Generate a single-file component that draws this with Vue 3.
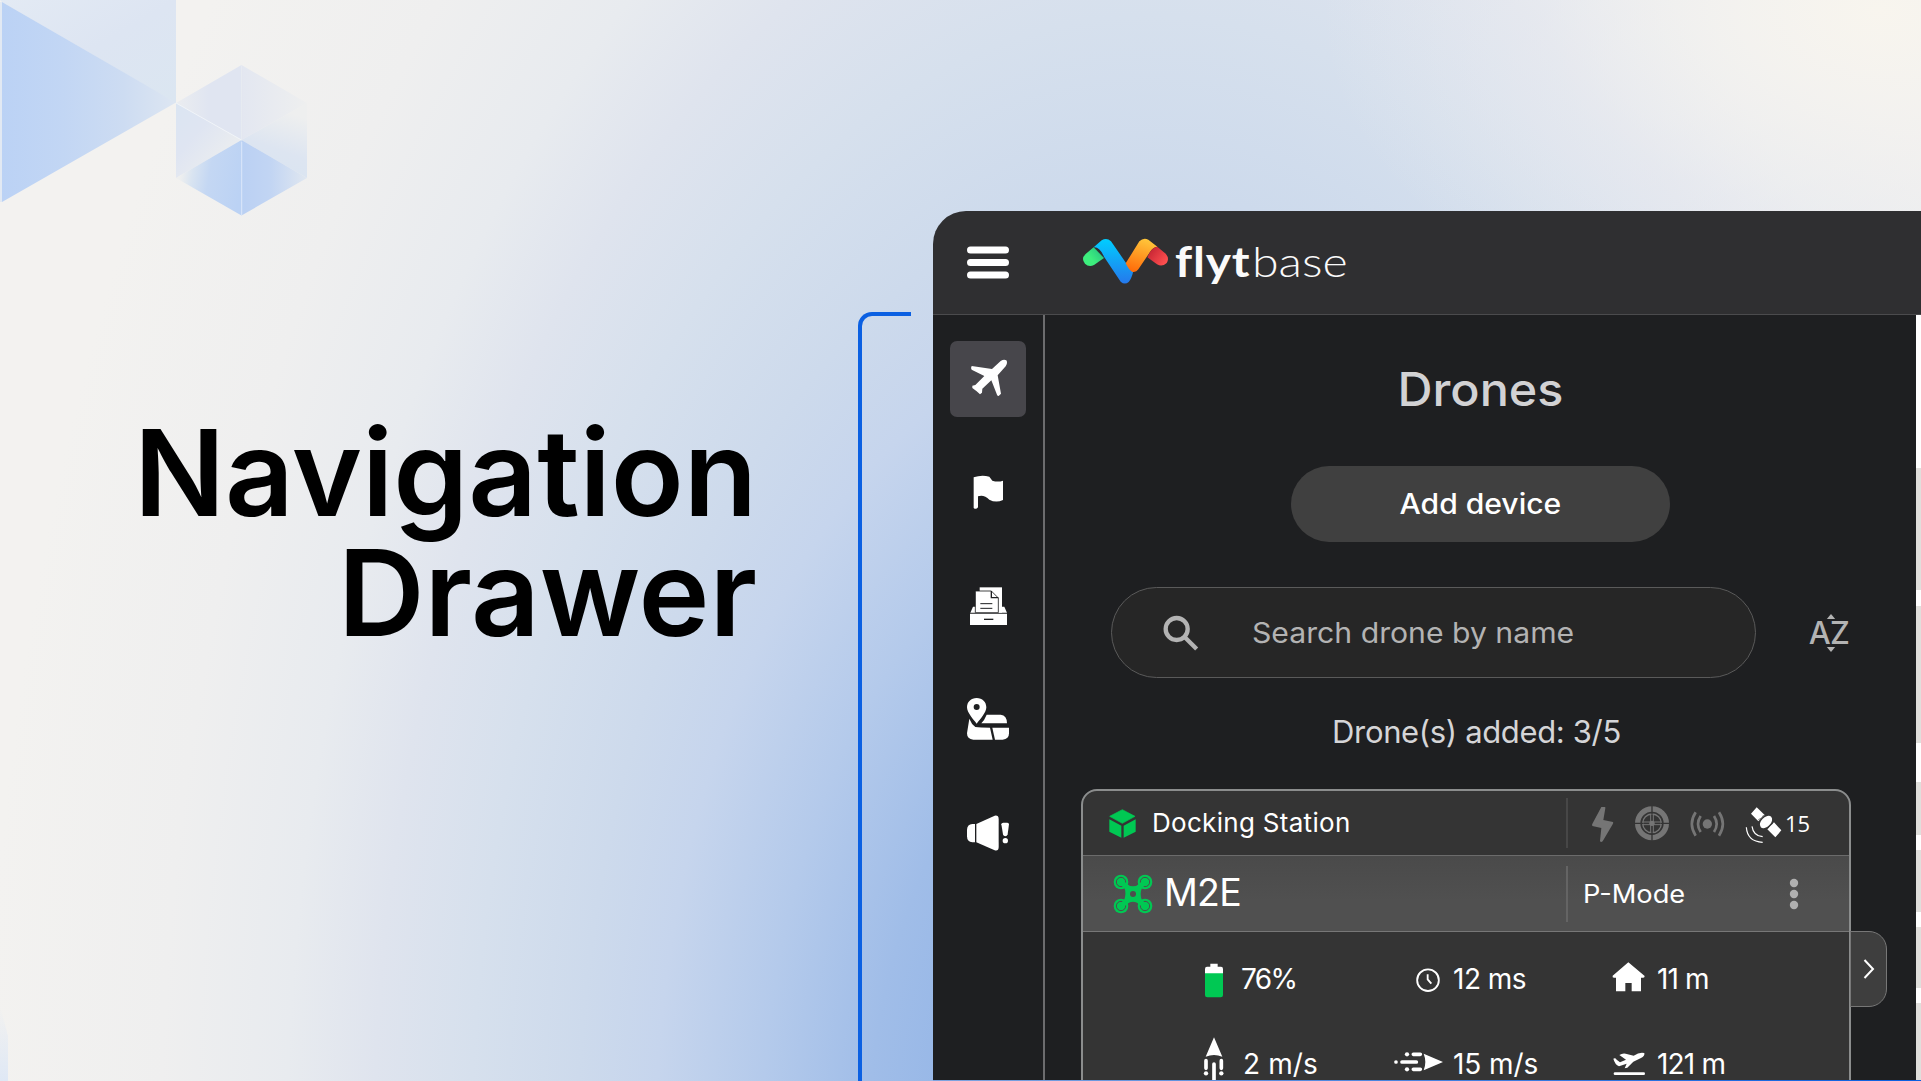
<script setup>
const stats = [
  { icon: 'battery', text: '76%', ls: -1.6, dx: -1 },
  { icon: 'clock', text: '12 ms', ls: -0.5, dx: -1 },
  { icon: 'home', text: '11 m', ls: -0.9, dx: -1 },
  { icon: 'up', text: '2 m/s', ls: 0.1, dx: 1 },
  { icon: 'forward', text: '15 m/s', ls: -0.1, dx: -1 },
  { icon: 'takeoff', text: '121 m', ls: -0.8, dx: -1 },
]
</script>

<template>
  <div class="page">
    <svg class="decor" width="330" height="230" viewBox="0 0 330 230">
      <defs>
        <linearGradient id="tri" x1="0" y1="0" x2="1" y2="0">
          <stop offset="0" stop-color="#bbd2f5" /><stop offset=".35" stop-color="#c2d6f4" />
          <stop offset=".7" stop-color="#cddcf2" /><stop offset="1" stop-color="#dde6f2" />
        </linearGradient>
        <linearGradient id="band" x1="0" y1="0" x2="1" y2="1">
          <stop offset="0" stop-color="#e3eaf4" /><stop offset=".5" stop-color="#dde5f2" /><stop offset="1" stop-color="#dbe6f1" />
        </linearGradient>
        <linearGradient id="hTop" x1="0" y1="0" x2="1" y2="0">
          <stop offset="0" stop-color="#ebedf0" /><stop offset=".5" stop-color="#e0e5f1" />
        </linearGradient>
        <linearGradient id="hTopR" x1="0" y1="0" x2="1" y2="0">
          <stop offset="0" stop-color="#e3e7f1" /><stop offset="1" stop-color="#eeefef" />
        </linearGradient>
        <linearGradient id="hLeft" x1="0" y1="0" x2=".8" y2=".8">
          <stop offset="0" stop-color="#dbe5f2" /><stop offset=".45" stop-color="#dfe5f2" /><stop offset="1" stop-color="#eceeef" />
        </linearGradient>
        <linearGradient id="hRight" x1="0" y1="1" x2=".3" y2="0">
          <stop offset="0" stop-color="#d8e4f1" /><stop offset=".5" stop-color="#dde5f1" /><stop offset="1" stop-color="#eeefef" />
        </linearGradient>
        <linearGradient id="hBotL" x1="1" y1=".6" x2="0" y2=".4">
          <stop offset="0" stop-color="#bbd2f4" /><stop offset=".5" stop-color="#c4d7f3" /><stop offset=".75" stop-color="#d9e4f1" /><stop offset=".92" stop-color="#eeefef" />
        </linearGradient>
        <linearGradient id="hBotR" x1="0" y1="0" x2="1" y2="0">
          <stop offset="0" stop-color="#bad0f3" /><stop offset=".45" stop-color="#c2d5f3" /><stop offset="1" stop-color="#e0e7f0" />
        </linearGradient>
      </defs>
      <polygon points="0,0 176,0 176,103 2,2" fill="url(#band)" />
      <polygon points="2,2 176,102.500 2,202" fill="url(#tri)" />
      <path d="M1 2V202" stroke="#dce6f5" stroke-width="1.500" />
      <polygon points="241.500,65 241.500,140 176,103" fill="url(#hTop)" />
      <polygon points="241.500,65 241.500,140 307,103" fill="url(#hTopR)" />
      <polygon points="176,103 241.500,140 176,178" fill="url(#hLeft)" />
      <polygon points="307,103 241.500,140 307,178" fill="url(#hRight)" />
      <polygon points="241.500,140 241.500,215.500 176,178" fill="url(#hBotL)" />
      <polygon points="241.500,140 241.500,215.500 307,178" fill="url(#hBotR)" />
      <path d="M176 103L241.500 140" stroke="#f3f6fa" stroke-width=".8" />
      <path d="M241.700 142V215" stroke="#d9e6fa" stroke-width="1" />
      <path d="M241.700 66V140" stroke="#e9edf4" stroke-width=".6" />
    </svg>
    <i class="corner"></i>

    <h1 class="hero">Navigation<br />Drawer</h1>
    <div class="bracket"></div>

    <section class="panel">
      <header class="top">
        <svg class="burger" viewBox="0 0 42 32" width="42" height="33"><path d="M3.500 3.500H38.500M3.500 16H38.500M3.500 28.500H38.500" stroke="#fff" stroke-width="7" stroke-linecap="round" /></svg>
        <svg class="mark" viewBox="486 114 260 140" width="86.700" height="46.700">
          <defs>
            <linearGradient id="lb" x1="0" y1="0" x2="0" y2="1"><stop offset="0" stop-color="#00ceff" /><stop offset="1" stop-color="#2578ec" /></linearGradient>
            <linearGradient id="lo" x1=".6" y1="0" x2=".3" y2="1"><stop offset="0" stop-color="#ffc53a" /><stop offset="1" stop-color="#ff6c0a" /></linearGradient>
            <linearGradient id="lg" x1="1" y1="0" x2="0" y2=".7"><stop offset="0" stop-color="#22b982" /><stop offset=".7" stop-color="#3dee7d" /></linearGradient>
            <linearGradient id="lr" x1="0" y1="0" x2="1" y2=".7"><stop offset="0" stop-color="#bb1d2e" /><stop offset="1" stop-color="#ff5050" /></linearGradient>
          </defs>
          <path d="M552 174L522 195Q506 202 495 191Q482 176 497 162L521 142Z" fill="url(#lg)" />
          <path d="M521 142L545 121Q560 111 573 124L630 206L640 214Q634 238 626 246Q614 256 602 245L552 170Q539 140 521 142Z" fill="url(#lb)" />
          <path d="M617 190L658 124Q670 112 685 119L712 140Q698 142 690 156L655 208Q648 218 636 215Q627 211 617 190Z" fill="url(#lo)" />
          <path d="M712 140L737 161Q749 175 740 189Q726 202 711 193L682 172L690 156Q698 142 712 140Z" fill="url(#lr)" />
        </svg>
        <span class="word"><b>flyt</b><span>base</span></span>
      </header>

      <div class="body">
        <nav class="rail">
          <button class="tile active">
            <svg viewBox="60 63 228 228" width="76" height="76" fill="#fff"><path d="M186 147L212 123Q222 116 229 121Q234 128 227 139L203 166L213 221L206 228Q202 228 201 224L184 181L157 206L156 218L150 223L140 214L127 204L127 197L136 195L163 168L125 149Q121 145 125 138Z" /></svg>
          </button>
          <button class="tile">
            <svg viewBox="60 405 228 228" width="76" height="76" fill="#fff"><path d="M131 472Q155 463 178 470L187 482Q204 487 219 482V540Q198 550 178 539Q162 523 144 529V562Q138 570 131 564Z" /></svg>
          </button>
          <button class="tile">
            <svg viewBox="60 744 228 228" width="76" height="76">
              <path d="M149 802H216V878H149Z" fill="#fff" />
              <path d="M121 878L129 860H223L231 878Z" fill="#fff" />
              <path d="M136 878V813H184L205 834V878Z" fill="#fff" stroke="#1e1f21" stroke-width="2.500" />
              <path d="M184 813V833H205" fill="none" stroke="#1e1f21" stroke-width="4" />
              <path d="M151 851H187M151 865H187" stroke="#1e1f21" stroke-width="3" />
              <path d="M120 881H231V915H120Z" fill="#fff" />
              <path d="M162 898H190" stroke="#1e1f21" stroke-width="4" />
            </svg>
          </button>
          <button class="tile">
            <svg viewBox="60 184 228 228" width="76" height="76" fill="#fff">
              <path fill-rule="evenodd" d="M140 232C123 232 111 244 111 260C111 276 130 296 140 309C150 296 169 276 169 260C169 244 157 232 140 232ZM140 250A9 9 0 1 1 140 268A9 9 0 1 1 140 250Z" />
              <path d="M170 282H212Q231 284 231 308H154Q163 299 170 282Z" />
              <path d="M118 294Q124 310 136 319Q150 321 180 321L188 357H130Q111 356 111 338Z" />
              <path d="M187 321H237V338Q237 356 218 357H195Z" />
            </svg>
          </button>
          <button class="tile">
            <svg viewBox="60 526 228 228" width="76" height="76" fill="#fff">
              <path d="M135 613V668H127Q111 667 111 650V630Q112 614 127 613Z" />
              <path d="M139 613L194 588Q206 586 206 598V682Q206 695 194 692L139 668Z" />
              <path d="M214 614Q214 609 220 609H232Q237 609 237 614L233 644Q231 650 226 650Q220 650 219 644Z" /><circle cx="226" cy="663" r="8" />
            </svg>
          </button>
        </nav>

        <main class="main">
          <h2 class="title">Drones</h2>
          <button class="add"><span>Add device</span></button>
          <div class="search-row">
            <label class="search">
              <svg viewBox="217 130 108 108" width="36" height="36"><circle cx="258" cy="172" r="33" fill="none" stroke="#b3b3b3" stroke-width="13" /><path d="M281 195L318 232" stroke="#b3b3b3" stroke-width="13" /></svg>
              <span>Search drone by name</span>
            </label>
            <div class="az">
              <svg viewBox="0 0 10 6" width="10" height="5"><path d="M0 6L5 0L10 6Z" fill="#b3b3b3" /></svg>
              <span>AZ</span>
              <svg viewBox="0 0 10 6" width="10" height="5"><path d="M0 0L5 6L10 0Z" fill="#b3b3b3" /></svg>
            </div>
          </div>
          <p class="count">Drone(s) added: 3/5</p>

          <article class="card">
            <div class="row dock">
              <svg class="cube" viewBox="117 84 81 87" width="27" height="29" fill="#00c853"><path d="M157 86L195 106L157 127L119 106Z" stroke="#00c853" stroke-width="2" stroke-linejoin="round" /><path d="M118 115L154 134V170L118 152ZM197 115L161 134V170L197 152Z" /></svg>
              <span class="dock-name">Docking Station</span>
              <div class="right status">
                <svg viewBox="120 72 690 120" width="230" height="40">
                  <path d="M184 81H194Q197 81 196 85L190 120L219 126Q221 129 218 133L188 184Q182 188 180 183L184 144L157 138Q155 134 158 130Z" fill="#757575" />
                  <g fill="none" stroke="#757575"><circle cx="336" cy="130" r="43" stroke-width="16" /><circle cx="336" cy="130" r="28" stroke-width="4" /></g>
                  <path d="M336 78V104M336 156V182M284 130H310M362 130H388" stroke="#343434" stroke-width="4" />
                  <path d="M332 104V126H308M340 104V126H364M332 156V134H308M340 156V134H364" stroke="#757575" stroke-width="3" fill="none" /><circle cx="336" cy="130" r="8" fill="#757575" />
                  <circle cx="502" cy="132" r="14" fill="#757575" />
                  <path d="M482 108Q466 132 482 156M522 108Q538 132 522 156M467 97Q444 132 467 167M537 97Q560 132 537 167" fill="none" stroke="#757575" stroke-width="8" />
                  <g fill="#fff"><path d="M650 82L674 105L655 124L633 101ZM702 127L724 151L706 172L682 148Z" /><ellipse cx="678" cy="126" rx="22" ry="14" transform="rotate(-45 678 126)" /></g>
                  <path d="M655 119Q666 117 671 105M684 145Q686 134 699 130" stroke="#343434" stroke-width="2" fill="none" />
                  <path d="M619 142Q622 185 668 187M636 139Q640 168 668 170" stroke="#fff" stroke-width="3.500" fill="none" />
                </svg>
                <span class="sat">15</span>
              </div>
            </div>
            <div class="row drone">
              <svg class="quad" viewBox="129 280 120 120" width="40" height="40">
                <g fill="#00c853"><circle cx="153" cy="304" r="22" /><circle cx="225" cy="304" r="22" /><circle cx="153" cy="376" r="22" /><circle cx="225" cy="376" r="22" /></g>
                <g fill="none" stroke="#4d4d4d" stroke-width="3"><circle cx="153" cy="304" r="14" /><circle cx="225" cy="304" r="14" /><circle cx="153" cy="376" r="14" /><circle cx="225" cy="376" r="14" /></g>
                <path d="M153 304L174 322M225 304L204 322M153 376L174 358M225 376L204 358" stroke="#00c853" stroke-width="15" />
                <path d="M163 320L171 312Q189 322 207 312L216 321Q208 340 216 360L207 369Q189 358 171 369L162 360Q170 340 163 320Z" fill="#00c853" /><circle cx="189" cy="340" r="9" fill="#4d4d4d" />
              </svg>
              <span class="drone-name">M2E</span>
              <div class="right mode">
                <span>P-Mode</span>
                <svg viewBox="0 0 10 32" width="10" height="32" fill="#b0b0b0"><circle cx="5" cy="5" r="4.200" /><circle cx="5" cy="16" r="4.200" /><circle cx="5" cy="27" r="4.200" /></svg>
              </div>
            </div>
            <div class="stats">
              <div v-for="s in stats" :key="s.text" class="stat">
                <svg v-if="s.icon === 'battery'" viewBox="336 530 180 132" width="60" height="44"><path d="M421 550H443V559H453Q459 559 459 566V590H405V566Q405 559 411 559H421Z" fill="#fff" /><path d="M405 579H459V644Q459 651 452 651H412Q405 651 405 644Z" fill="#00c853" /></svg>
                <svg v-else-if="s.icon === 'clock'" viewBox="72 110 180 132" width="60" height="44" fill="none" stroke="#fff" stroke-width="5.500"><circle cx="174" cy="179.500" r="32.500" /><path d="M173 162V177L184 190" /></svg>
                <svg v-else-if="s.icon === 'home'" viewBox="174 530 180 132" width="60" height="44"><path d="M265 546L314 587Q314 593 308 592H303V633H275V608H256V633H228V592H222Q216 592 218 586Z" fill="#fff" /></svg>
                <svg v-else-if="s.icon === 'up'" viewBox="336 785 180 132" width="60" height="44"><path d="M432 771L457 829Q432 819 407 829Z" fill="#fff" /><path d="M432 851V900M408 841V864M454 841V864" stroke="#fff" stroke-width="11" stroke-linecap="round" /><g fill="#fff"><circle cx="408" cy="879" r="6.500" /><circle cx="454" cy="879" r="6.500" /></g></svg>
                <svg v-else-if="s.icon === 'forward'" viewBox="72 365 180 132" width="60" height="44"><path d="M219 425L161 450Q171 425 161 400Z" fill="#fff" /><path d="M96 425H139M130 402H151M130 447H151" stroke="#fff" stroke-width="11" stroke-linecap="round" /><g fill="#fff"><circle cx="78" cy="425" r="5.500" /><circle cx="111" cy="402" r="6.500" /><circle cx="111" cy="447" r="6.500" /></g></svg>
                <svg v-else viewBox="174 785 180 132" width="60" height="44"><path d="M220 835Q226 832 230 838L240 846L258 838L238 824Q247 818 257 820L281 826Q299 814 313 818Q315 827 303 833L280 844L262 862L254 864L260 850L237 858Q225 853 220 835Z" fill="#fff" /><path d="M225 880H311" stroke="#fff" stroke-width="8" stroke-linecap="round" /></svg>
                <span :style="{ letterSpacing: s.ls + 'px', marginLeft: s.dx + 'px' }">{{ s.text }}</span>
              </div>
            </div>
            <div class="tab"><svg viewBox="0 0 12 20" width="12" height="20"><path d="M1.500 1L10 10L1.500 19" fill="none" stroke="#fff" stroke-width="2" /></svg></div>
          </article>
        </main>
        <aside class="map"></aside>
      </div>
    </section>
    <i class="baseline"></i>
  </div>
</template>

<style>
body { margin: 0; overflow: hidden; }
</style>

<style scoped>
* { box-sizing: border-box; }
.page {
  position: relative; display: flex; align-items: flex-start;
  width: 1921px; height: 1081px; overflow: hidden;
  font-family: Inter, "Liberation Sans", sans-serif; color: #fff;
  background:
    radial-gradient(ellipse 560px 350px at 1880px 10px, #f8f5ee 0%, rgba(245,243,239,.85) 25%, rgba(238,238,240,.45) 60%, rgba(225,230,240,0) 100%),
    radial-gradient(ellipse 970px 1620px at 1150px 1150px, #8aafe6 10%, #a0bde8 29%, #b4caeb 40%, #c6d5ed 51%, #cddaec 59%, #d6e0ed 70%, #dfe4ee 80%, #e8ebef 89%, #efefef 102%, #f3f2f0 120%);
}
.decor { position: absolute; left: 0; top: 0; }
.corner { position: absolute; left: 0; bottom: 0; width: 8px; height: 75px; background: linear-gradient(#e9eef500, #dfe8f5); clip-path: polygon(0 0, 100% 40%, 100% 100%, 0 100%); }
.hero { width: 757px; margin: 413px 0 0; text-align: right; font-weight: 600; font-size: 120px; line-height: 120px; letter-spacing: -.1px; color: #000; white-space: nowrap; }
.bracket { width: 53px; height: 800px; margin: 312px 0 0 101px; border: solid #0b60e2; border-width: 4px 0 0 4px; border-top-left-radius: 14px; flex: none; }
.panel { width: 988px; height: 869px; margin: 211px 0 0 22px; flex: none; border-radius: 33px 0 0 0; overflow: hidden; background: #2f2f31; }
.top { display: flex; align-items: center; height: 104px; border-bottom: 1px solid #4b4b4d; padding-left: 34px; }
.burger { margin-top: -1px; }
.mark { margin: -2px 0 0 73px; }
.word { display: flex; align-items: baseline; margin: -4px 0 0 6px; line-height: 50px; color: #fafafa; }
.word b { width: 77px; font: 700 42px/50px Lato, sans-serif; letter-spacing: .7px; transform: scaleX(1.14); transform-origin: left; }
.word span { font: 300 42px/50px Lato, sans-serif; transform: scaleX(1.15); transform-origin: left; }
.body { display: flex; height: 765px; background: #1e1f21; }
.rail { width: 112px; border-right: 2px solid #6c6c6e; padding: 26px 0 0 17px; display: flex; flex-direction: column; gap: 37.500px; flex: none; }
.tile { width: 76px; height: 76px; padding: 0; border: 0; border-radius: 7px; background: none; flex: none; }
.tile svg { display: block; }
.active { background: #47464b; }
.main { width: 871px; display: flex; flex-direction: column; flex: none; }
.title { margin: 47px 0 0; font-weight: 450; font-size: 46px; line-height: 54px; text-align: center; color: #d2d2d4; transform: scaleX(1.055); }
.add { width: 379px; height: 76px; margin: 50px 0 0 246px; padding: 0; border: 0; border-radius: 38px; background: #404040; color: #fff; font: 500 28px/76px Inter, sans-serif; }
.add span { display: inline-block; transform: scaleX(1.073); }
.search-row { display: flex; align-items: center; margin: 45px 0 0 66px; }
.search { display: flex; align-items: center; width: 645px; height: 91px; padding-left: 51px; border: 1.500px solid #5a5a5a; border-radius: 46px; background: #262626; }
.search span { margin-left: 53px; font-size: 28px; color: #b3b3b3; white-space: nowrap; transform: scaleX(1.078); transform-origin: left; }
.az { display: flex; flex-direction: column; align-items: center; margin-left: 51px; width: 44px; color: #b3b3b3; }
.az span { font: 500 31px/23px Inter, sans-serif; margin: 2px 0 3px; letter-spacing: -.7px; }
.az svg { display: block; position: relative; left: 2px; }
.count { margin: 36px 8px 0 0; text-align: center; font-size: 31px; line-height: 36px; letter-spacing: -.350px; color: #d5d5d7; }
.card { position: relative; width: 770px; height: 400px; margin: 39px 0 0 36px; border: 2px solid #8b8d8d; border-radius: 16px 16px 0 0; background: #343434; flex: none; }
.row { display: flex; align-items: center; }
.dock { height: 64px; padding-left: 26px; }
.dock-name { margin: -1px 0 0 16px; font-size: 26px; letter-spacing: .3px; }
.right { margin-left: auto; width: 283px; border-left: 2px solid #474747; display: flex; align-items: center; }
.status { height: 50px; }
.status svg { margin: 2px 0 0 12px; }
.sat { margin-left: -25px; font: 400 22px/30px "Open Sans", sans-serif; }
.drone { height: 77px; padding-left: 30px; background: linear-gradient(#4a4a4a, #505050 60%); border-top: 1px solid #6b6b6b; border-bottom: 1px solid #777; }
.drone-name { margin: -2px 0 0 11px; font-size: 37.500px; letter-spacing: -.8px; }
.mode { height: 56px; border-color: #646464; justify-content: space-between; padding: 0 50px 0 15px; font-size: 25px; }
.mode span { transform: scaleX(1.09); transform-origin: left; }
.stats { display: grid; grid-template-columns: 212px 204px 200px; grid-auto-rows: 85px; padding: 4px 0 0 99px; }
.stat { display: flex; align-items: center; font-size: 28px; white-space: nowrap; }
.stat svg { overflow: visible; flex: none; }
.tab { position: absolute; left: 767px; top: 140px; width: 37px; height: 76px; border: 1px solid #777; border-radius: 0 18px 18px 0; background: #3e3e3e; display: flex; align-items: center; padding-left: 12px; }
.map { width: 5px; background: linear-gradient(#fff 0 20%, #e0dfdc 20% 36%, #fff 36% 38%, #e0dfdc 38% 56%, #fff 56% 61%, #e0dfdc 61% 68%, #fff 68% 70%, #e0dfdc 70% 78%, #fff 78% 80%, #e0dfdc 80% 88%, #fff 88% 90%, #e0dfdc 90%); }
.baseline { position: absolute; left: 933px; right: 0; bottom: 0; height: 1.500px; background: linear-gradient(90deg, #7fa4de, #0b5fe0); }
</style>
